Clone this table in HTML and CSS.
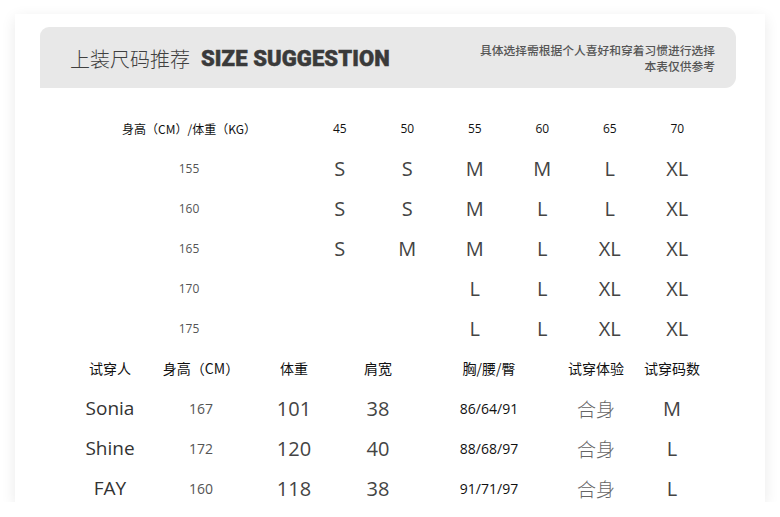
FILE: index.html
```html
<!DOCTYPE html>
<html lang="zh-CN">
<head>
<meta charset="utf-8">
<title>上装尺码推荐</title>
<link rel="stylesheet" href="styles.css">
</head>
<body>
<div class="card">
  <div class="banner">
    <div class="title"><span class="title-cn">上装尺码推荐</span><span class="title-en">SIZE SUGGESTION</span></div>
    <div class="note">具体选择需根据个人喜好和穿着习惯进行选择<br>本表仅供参考</div>
  </div>

  <div class="size-grid">
    <div class="hd axis">身高（CM）/体重（KG）</div>
    <div class="hd">45</div><div class="hd">50</div><div class="hd">55</div><div class="hd">60</div><div class="hd">65</div><div class="hd">70</div>

    <div class="h">155</div><div class="s">S</div><div class="s">S</div><div class="s">M</div><div class="s">M</div><div class="s">L</div><div class="s">XL</div>
    <div class="h">160</div><div class="s">S</div><div class="s">S</div><div class="s">M</div><div class="s">L</div><div class="s">L</div><div class="s">XL</div>
    <div class="h">165</div><div class="s">S</div><div class="s">M</div><div class="s">M</div><div class="s">L</div><div class="s">XL</div><div class="s">XL</div>
    <div class="h">170</div><div class="s"></div><div class="s"></div><div class="s">L</div><div class="s">L</div><div class="s">XL</div><div class="s">XL</div>
    <div class="h">175</div><div class="s"></div><div class="s"></div><div class="s">L</div><div class="s">L</div><div class="s">XL</div><div class="s">XL</div>
  </div>

  <div class="try-grid">
    <div class="th">试穿人</div><div class="th">身高（CM）</div><div class="th">体重</div><div class="th">肩宽</div><div class="th">胸/腰/臀</div><div class="th">试穿体验</div><div class="th">试穿码数</div>

    <div class="name">Sonia</div><div class="sm">167</div><div class="big">101</div><div class="big">38</div><div class="bwh">86/64/91</div><div class="fit">合身</div><div class="big">M</div>
    <div class="name">Shine</div><div class="sm">172</div><div class="big">120</div><div class="big">40</div><div class="bwh">88/68/97</div><div class="fit">合身</div><div class="big">L</div>
    <div class="name">FAY</div><div class="sm">160</div><div class="big">118</div><div class="big">38</div><div class="bwh">91/71/97</div><div class="fit">合身</div><div class="big">L</div>
  </div>
</div>
</body>
</html>
```

FILE: styles.css
```css
html, body {
  margin: 0;
  padding: 0;
  background: #ffffff;
}

body {
  font-family: "Open Sans", "Noto Sans CJK SC", sans-serif;
  color: #333;
}

.card {
  margin: 14px 0 0 15px;
  width: 750px;
  height: 488px;
  overflow: hidden;
  background: #fff;
  box-shadow: 0 4px 14px rgba(0, 0, 0, 0.09);
  display: flex;
  flex-direction: column;
}

.card > * {
  flex-shrink: 0;
}

.banner {
  margin: 13px 0 0 25px;
  width: 696px;
  height: 61px;
  background: #e8e8e8;
  border-radius: 9px 11px 11px 0;
  display: flex;
  align-items: center;
  justify-content: space-between;
  padding: 0 21px 0 30px;
  box-sizing: border-box;
}

.title {
  display: flex;
  align-items: center;
  gap: 11px;
  padding-top: 1px;
}

.title-cn {
  font-family: "Noto Sans CJK SC", sans-serif;
  font-size: 20px;
  font-weight: 300;
  color: #404040;
}

.title-en {
  font-family: Roboto, "Open Sans", sans-serif;
  font-weight: 900;
  font-size: 22px;
  color: #3a3a3a;
  letter-spacing: 0.1px;
  -webkit-text-stroke: 0.5px #3a3a3a;
}

.note {
  font-family: "Noto Sans CJK SC", sans-serif;
  font-size: 11.75px;
  font-weight: 500;
  line-height: 16px;
  color: #555;
  text-align: right;
  padding-top: 1px;
}

.size-grid {
  margin: 20px 0 0 57px;
  display: grid;
  grid-template-columns: 234px repeat(6, 67.5px);
  grid-auto-rows: 40px;
  align-items: center;
  justify-items: center;
}

.hd {
  font-size: 12px;
  color: #111;
}

.axis {
  font-family: "Noto Sans CJK SC", sans-serif;
  font-size: 12px;
  margin-left: 0;
}

.h {
  font-size: 12px;
  color: #555;
}

.s {
  font-size: 20px;
  color: #444;
}

.try-grid {
  margin: 0 0 0 50px;
  display: grid;
  grid-template-columns: 90px 92px 94px 74px 148px 66px 86px;
  grid-auto-rows: 40px;
  align-items: center;
  justify-items: center;
}

.th {
  font-family: "Noto Sans CJK SC", sans-serif;
  font-size: 14px;
  color: #111;
  white-space: nowrap;
}

.name {
  font-size: 19px;
  color: #333;
}

.sm {
  font-size: 14px;
  color: #555;
}

.big {
  font-size: 20px;
  color: #444;
}

.bwh {
  font-size: 14px;
  color: #111;
}

.fit {
  font-family: "Noto Sans CJK SC", sans-serif;
  font-size: 19px;
  font-weight: 300;
  color: #666;
}
```
